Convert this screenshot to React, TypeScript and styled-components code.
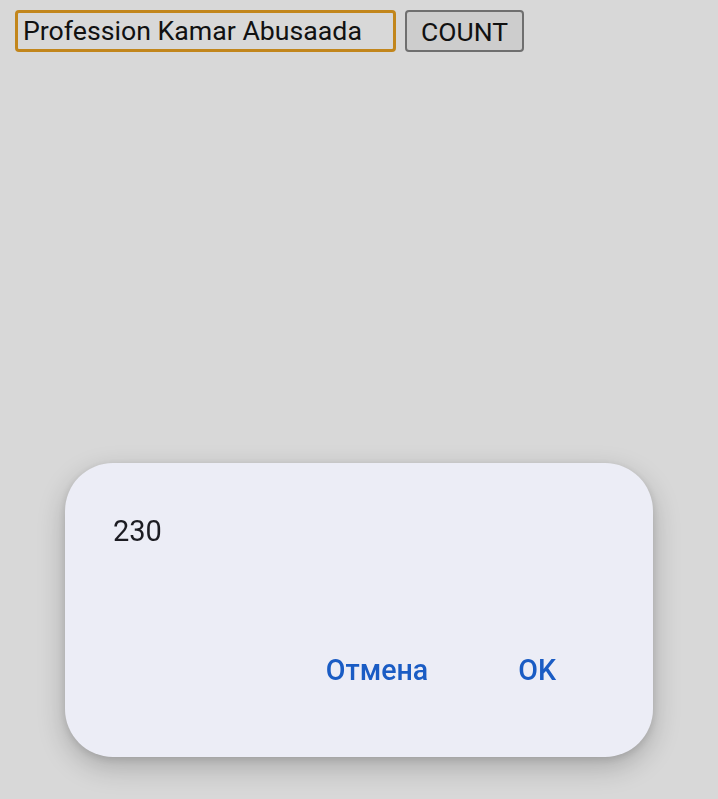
import styled, { createGlobalStyle } from 'styled-components';

const GlobalStyles = createGlobalStyle`
  html, body {
    margin: 0;
    padding: 0;
    height: 100%;
    background: #d8d8d8;
    font-family: Roboto, "Noto Sans", sans-serif;
  }
  #root {
    height: 100%;
  }
`;

function App() {
  return (
    <>
      <GlobalStyles />
      <Page>
        <Toolbar>
          <NameInput defaultValue="Profession Kamar Abusaada" />
          <CountButton>COUNT</CountButton>
        </Toolbar>
      </Page>
      <Scrim>
        <Dialog>
          <Message>230</Message>
          <Actions>
            <ActionButton>Отмена</ActionButton>
            <ActionButton>OK</ActionButton>
          </Actions>
        </Dialog>
      </Scrim>
    </>
  );
}

const Page = styled.div`
  padding: 10px 15px;
`;

const Toolbar = styled.div`
  display: flex;
  align-items: center;
  gap: 9px;
`;

const NameInput = styled.input`
  box-sizing: border-box;
  width: 381px;
  height: 42px;
  padding: 0 5px;
  border: 3px solid #c2861c;
  border-radius: 4px;
  background: #d8d8d8;
  color: #111;
  font-family: Roboto, sans-serif;
  font-size: 26.7px;
  outline: none;
`;

const CountButton = styled.button`
  box-sizing: border-box;
  width: 119px;
  height: 42px;
  padding: 0;
  border: 2px solid #6f6f6f;
  border-radius: 4px;
  background: #cdcdcd;
  color: #111;
  font-family: Roboto, sans-serif;
  font-size: 26.5px;
`;

const Scrim = styled.div`
  position: fixed;
  inset: 0;
  display: flex;
  justify-content: center;
  align-items: flex-end;
  padding-bottom: 42px;
`;

const Dialog = styled.div`
  box-sizing: border-box;
  width: 588px;
  height: 294px;
  padding: 50px 48px 0;
  border-radius: 48px;
  background: #ecedf6;
  box-shadow: 0 10px 28px rgba(0, 0, 0, 0.22), 0 2px 8px rgba(0, 0, 0, 0.12);
  display: flex;
  flex-direction: column;
`;

const Message = styled.div`
  color: #1c1c22;
  font-size: 29px;
  line-height: 36px;
`;

const Actions = styled.div`
  display: flex;
  justify-content: flex-end;
  gap: 90px;
  margin-top: 103px;
  padding-right: 49px;
`;

const ActionButton = styled.div`
  color: #1a5cc4;
  font-size: 28.6px;
  font-weight: 500;
  line-height: 36px;
`;

export default App;
